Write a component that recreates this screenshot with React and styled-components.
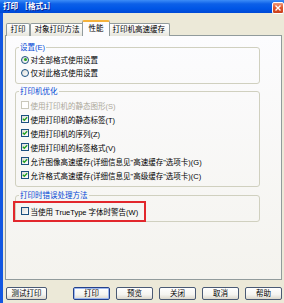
import React from 'react'
import styled, { createGlobalStyle, css } from 'styled-components';

const GlobalStyle = createGlobalStyle`
    html, body {
        margin: 0;
        padding: 0;
        background: #ECE9D8;
    }
    * {
        box-sizing: border-box;
    }
`;

const font = `"Liberation Sans", "Noto Sans CJK SC", sans-serif`;

const Check = ({ checked, disabled }) => (
    <Box $disabled={disabled}>
        {checked && (
            <svg width="6" height="6" viewBox="0 0 6 6">
                <polyline points="0.8,2.8 2.3,4.3 5.2,1.2" fill="none" stroke="#21A121" strokeWidth="1.3" />
            </svg>
        )}
    </Box>
);

const Radio = ({ checked }) => (
    <Round>{checked && <Dot />}</Round>
);

const App = () => {
    const options = [
        { text: '使用打印机的静态图形(S)', checked: false, disabled: true },
        { text: '使用打印机的静态标签(T)', checked: true },
        { text: '使用打印机的序列(Z)', checked: true },
        { text: '使用打印机的标签格式(V)', checked: true },
        { text: '允许图像高速缓存(详细信息见"高速缓存"选项卡)(G)', checked: true },
        { text: '允许格式高速缓存(详细信息见"高级缓存"选项卡)(C)', checked: true },
    ];
    const tabs = ['打印', '对象打印方法', '性能', '打印机高速缓存'];
    return (
        <>
            <GlobalStyle />
            <Window>
                <TitleBar>
                    <Title>打印 ［格式1］</Title>
                    <CloseBtn>
                        <svg width="6" height="6" viewBox="0 0 6 6">
                            <path d="M0.5 0.5L5.5 5.5M5.5 0.5L0.5 5.5" stroke="#fff" strokeWidth="1.4" />
                        </svg>
                    </CloseBtn>
                </TitleBar>
                <Body>
                    <TabStrip>
                        {tabs.map(t => <Tab key={t} $active={t === '性能'}>{t}</Tab>)}
                    </TabStrip>
                    <Panel>
                        <Group $mt={0}>
                            <Legend>设置(E)</Legend>
                            <Row $h={13}><Radio checked />对全部格式使用设置</Row>
                            <Row $h={13}><Radio />仅对此格式使用设置</Row>
                        </Group>
                        <Group $mt={3} $pt={2}>
                            <Legend>打印机优化</Legend>
                            {options.map(o => (
                                <Row key={o.text} $disabled={o.disabled}>
                                    <Check checked={o.checked} disabled={o.disabled} />{o.text}
                                </Row>
                            ))}
                        </Group>
                        <Group $mt={4} $pt={4} $pb={3}>
                            <Legend>打印时错误处理方法</Legend>
                            <Highlight>
                                <Row><Check />当使用 TrueType 字体时警告(W)</Row>
                            </Highlight>
                        </Group>
                    </Panel>
                    <ButtonBar>
                        <Button $w={41}>测试打印</Button>
                        <ButtonGroup>
                            <Button $w={37} $default>打印</Button>
                            <Button $w={37}>预览</Button>
                            <Button $w={37}>关闭</Button>
                            <Button $w={37}>取消</Button>
                            <Button $w={37}>帮助</Button>
                        </ButtonGroup>
                    </ButtonBar>
                </Body>
            </Window>
        </>
    )
}

const Window = styled.div`
    width: 284px;
    height: 303px;
    display: flex;
    flex-direction: column;
    background: #ECE9D8;
    overflow: hidden;
    font-family: ${font};
`;
const TitleBar = styled.div`
    height: 13px;
    flex: none;
    display: flex;
    align-items: center;
    justify-content: space-between;
    padding-left: 3px;
    background: linear-gradient(180deg, #3D8DF7 0%, #0C60E8 30%, #0056E6 65%, #0049D6 100%);
`;
const Title = styled.span`
    color: #fff;
    font-weight: bold;
    font-size: 7.6px;
    line-height: 10px;
    white-space: nowrap;
    text-shadow: 1px 1px 0 #0A1E8C;
`;
const CloseBtn = styled.div`
    width: 12px;
    height: 12px;
    margin-top: 2px;
    display: flex;
    align-items: center;
    justify-content: center;
    border: 1px solid #fff;
    border-radius: 2px;
    background: linear-gradient(180deg, #F09A7C 0%, #E2582F 45%, #C9401C 100%);
`;
const Body = styled.div`
    flex: 1;
    display: flex;
    flex-direction: column;
    border-left: 3px solid #1257E2;
    padding: 8px 2px 3px 2px;
    min-height: 0;
`;
const TabStrip = styled.div`
    height: 15px;
    flex: none;
    display: flex;
    align-items: flex-end;
    padding-left: 1px;
    position: relative;
    z-index: 1;
    margin-bottom: -1px;
`;
const Tab = styled.div`
    height: 13px;
    padding: 0 3.5px;
    font-size: 7.5px;
    line-height: 12px;
    color: #000;
    white-space: nowrap;
    border: 1px solid #919B9C;
    border-bottom: none;
    border-radius: 2px 2px 0 0;
    background: linear-gradient(180deg, #FFFFFF 0%, #F3F3EF 60%, #E6E5DC 100%);
    ${props => props.$active && css`
    height: 16px;
    margin: 0 -2px;
    padding: 0 5.5px;
    line-height: 13px;
    position: relative;
    z-index: 2;
    border-top: 2px solid #F5B23A;
    background: #FCFCFE;
    `}
`;
const Panel = styled.div`
    flex: 1;
    display: flex;
    flex-direction: column;
    border: 1px solid #919B9C;
    background: linear-gradient(180deg, #FCFCFE 0%, #F4F3EE 100%);
    padding: 7px 21px 0 9px;
`;
const Group = styled.fieldset`
    margin: ${props => props.$mt}px 0 0 0;
    padding: ${props => props.$pt || 1}px 0 ${props => props.$pb || 4}px 5px;
    border: 1px solid #D0D0BF;
    border-radius: 3px;
    min-width: 0;
`;
const Legend = styled.legend`
    font-size: 7.5px;
    line-height: 9px;
    color: #0046D5;
    padding: 0 1px;
    margin-left: -2px;
`;
const Row = styled.div`
    display: flex;
    align-items: center;
    gap: 1.5px;
    height: ${props => props.$h || 14}px;
    font-size: 7.5px;
    white-space: nowrap;
    color: ${props => props.$disabled ? '#ACA899' : '#000'};
`;
const Box = styled.span`
    width: 8px;
    height: 8px;
    flex: none;
    display: flex;
    align-items: center;
    justify-content: center;
    border: 1px solid ${props => props.$disabled ? '#CAC8BB' : '#1C5180'};
    background: ${props => props.$disabled ? '#FFFFFF' : 'linear-gradient(135deg, #DCDCD7 0%, #FFFFFF 100%)'};
`;
const Round = styled.span`
    width: 8px;
    height: 8px;
    flex: none;
    display: flex;
    align-items: center;
    justify-content: center;
    border: 1px solid #1C5180;
    border-radius: 50%;
    background: linear-gradient(135deg, #DCDCD7 0%, #FFFFFF 100%);
`;
const Dot = styled.span`
    width: 3px;
    height: 3px;
    border-radius: 50%;
    background: #21A121;
`;
const Highlight = styled.div`
    width: fit-content;
    margin: -3px 0 -4px -8px;
    padding: 1px 6px 2px 6px;
    border: 2px solid #E2272C;
`;
const ButtonBar = styled.div`
    flex: none;
    display: flex;
    justify-content: space-between;
    margin-top: 7px;
    padding-left: 1px;
`;
const ButtonGroup = styled.div`
    display: flex;
    gap: 6px;
`;
const Button = styled.button`
    width: ${props => props.$w}px;
    height: 13px;
    padding: 0;
    font-family: ${font};
    font-size: 7.5px;
    line-height: 11px;
    color: #000;
    border: 1px solid #4A5A74;
    border-radius: 2px;
    background: linear-gradient(180deg, #FFFFFF 0%, #F4F4F0 60%, #DCD8CC 100%);
    ${props => props.$default && css`
    border-color: #23418C;
    box-shadow: inset 0 0 0 1px #9DB7EE;
    `}
`;

export default App;
